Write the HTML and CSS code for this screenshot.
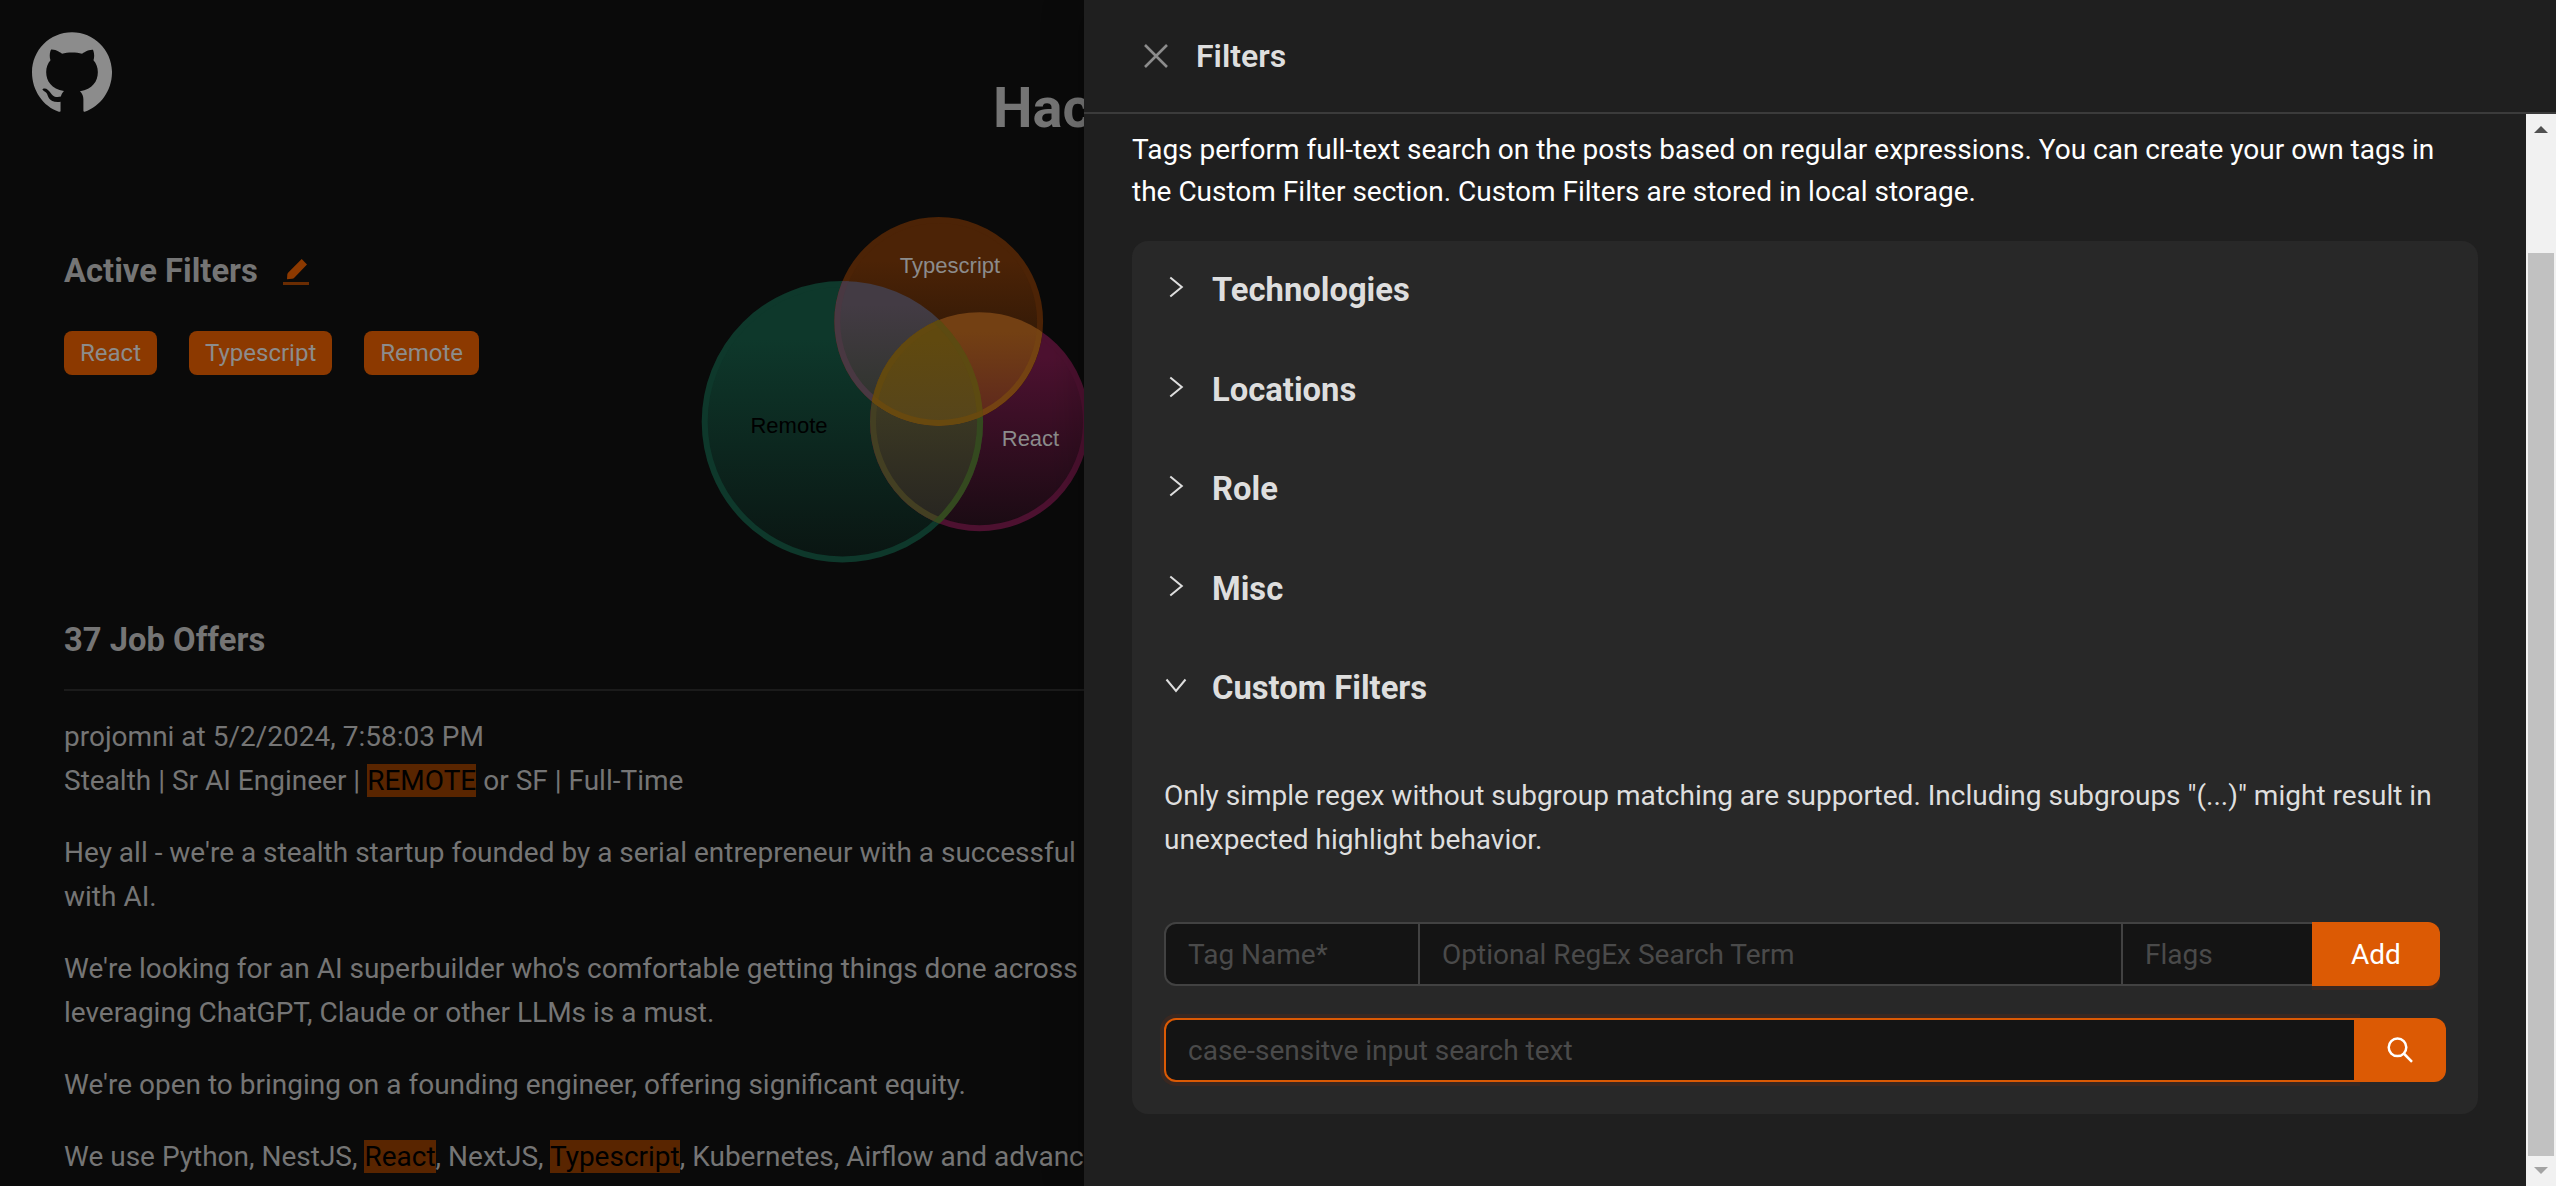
FILE: index.html
```html
<!DOCTYPE html>
<html lang="en">
<head>
<meta charset="utf-8">
<title>Hacker News Jobs</title>
<link rel="stylesheet" href="styles.css">
</head>
<body>
<div class="app">
  <main class="page">
    <a class="github" href="#" aria-label="GitHub">
      <svg viewBox="64 64 896 896" width="80" height="80" fill="currentColor"><path d="M511.600 66C264 66 64 266 64 513.500 64 718.900 189.300 895 363.800 956c23.500 5.900 19.900-10.800 19.900-22.200v-87.500c-135.700 15.900-141.200-73.900-150.300-88.900C215 726 171.500 718 184.500 703c30.900-15.900 62.400 4 98.900 57.900 26.400 39.100 77.900 32.500 104 26 5.700-23.500 17.900-44.500 34.700-60.800-140.600-25.200-199.200-111-199.200-213 0-49.500 16.300-95 48.300-131.700-20.400-60.500 1.900-112.300 4.900-120 58.100-5.200 118.500 41.600 123.200 45.300 33-8.900 70.700-13.600 112.900-13.600 42.400 0 80.200 4.900 113.500 13.900 11.300-8.600 67.300-48.800 121.300-43.900 2.900 7.700 24.700 58.300 5.500 118 32.400 36.800 48.900 82.700 48.900 132.300 0 102.200-59 188.100-200 212.900a127.500 127.500 0 0138.100 91v122.500c.8 9 0 17.900 15 17.900 177.100-59.700 305.600-237 305.600-444.100C960 266 759 66 511.600 66z"/></svg>
    </a>
    <h1 class="title">Hacker News Jobs</h1>
    <div class="summary">
      <section class="active">
        <h3 class="heading">Active Filters
          <svg class="edit" viewBox="0 0 26 27" width="26" height="27"><path d="M18.700 1L24 6.500 11.500 19.500Q10.500 20.700 9 20.700L4 21.300 4.300 16.500Q4.400 15.300 5.300 14.400Z" fill="#8c3900"/><path d="M0 24h26v3H0z" fill="#6a2c02"/></svg>
        </h3>
        <div class="tags"><span class="tag">React</span><span class="tag">Typescript</span><span class="tag">Remote</span></div>
      </section>
      <svg class="venn" viewBox="700 216 390 350" width="390" height="350">
        <defs>
          <linearGradient id="g-remote" x2="0" y2="1"><stop offset=".2" stop-color="#0e382b"/><stop offset="1" stop-color="#0a1512"/></linearGradient>
          <linearGradient id="g-ts" x2="0" y2="1"><stop offset=".2" stop-color="#4c2306"/><stop offset="1" stop-color="#190f07"/></linearGradient>
          <linearGradient id="g-react" x2="0" y2="1"><stop offset=".2" stop-color="#4d1130"/><stop offset="1" stop-color="#1a0b13"/></linearGradient>
          <linearGradient id="g-rt" gradientUnits="userSpaceOnUse" x1="0" y1="280" x2="0" y2="402"><stop offset=".2" stop-color="#433b44"/><stop offset="1" stop-color="#30342d"/></linearGradient>
          <linearGradient id="g-tr" gradientUnits="userSpaceOnUse" x1="0" y1="312" x2="0" y2="412"><stop offset=".2" stop-color="#734013"/><stop offset="1" stop-color="#5f291d"/></linearGradient>
          <linearGradient id="g-rr" gradientUnits="userSpaceOnUse" x1="0" y1="400" x2="0" y2="524"><stop offset="0" stop-color="#3d3a23"/><stop offset="1" stop-color="#272521"/></linearGradient>
          <linearGradient id="g-all" gradientUnits="userSpaceOnUse" x1="0" y1="320" x2="0" y2="422"><stop offset=".2" stop-color="#60490f"/><stop offset="1" stop-color="#56451b"/></linearGradient>
          <clipPath id="c-remote"><circle cx="842.400" cy="421.700" r="140.700"/></clipPath>
          <clipPath id="c-ts"><circle cx="938.700" cy="321.500" r="104.400"/></clipPath>
          <clipPath id="c-react"><circle cx="979.500" cy="421.700" r="109.500"/></clipPath>
        </defs>
        <circle cx="842.400" cy="421.700" r="137.700" fill="url(#g-remote)" stroke="#0e382b" stroke-width="6"/>
        <circle cx="979.500" cy="421.700" r="106.500" fill="url(#g-react)" stroke="#4d1130" stroke-width="6"/>
        <circle cx="938.700" cy="321.500" r="101.400" fill="url(#g-ts)" stroke="#4c2306" stroke-width="6"/>
        <g clip-path="url(#c-remote)">
          <circle cx="938.700" cy="321.500" r="101.400" fill="url(#g-rt)" stroke="#493842" stroke-width="6"/>
          <circle cx="979.500" cy="421.700" r="106.500" fill="url(#g-rr)" stroke="#433f22" stroke-width="6"/>
        </g>
        <g clip-path="url(#c-react)">
          <circle cx="842.400" cy="421.700" r="137.700" fill="none" stroke="#34491f" stroke-width="6"/>
          <g clip-path="url(#c-ts)">
            <circle cx="938.700" cy="321.500" r="101.400" fill="url(#g-tr)" stroke="#744212" stroke-width="6"/>
            <g clip-path="url(#c-remote)">
              <circle cx="938.700" cy="321.500" r="101.400" fill="url(#g-all)"/>
              <circle cx="979.500" cy="421.700" r="106.500" fill="none" stroke="#62490f" stroke-width="6"/>
              <circle cx="842.400" cy="421.700" r="137.700" fill="none" stroke="#5c4a11" stroke-width="6"/>
              <circle cx="938.700" cy="321.500" r="101.400" fill="none" stroke="#68490f" stroke-width="6"/>
            </g>
          </g>
        </g>
        <text class="venn-light" x="950" y="273" text-anchor="middle">Typescript</text>
        <text class="venn-dark" x="789" y="433" text-anchor="middle">Remote</text>
        <text class="venn-light" x="1030.500" y="446" text-anchor="middle">React</text>
      </svg>
    </div>
    <h3 class="heading offers">37 Job Offers</h3>
    <article class="post">
      <p>projomni at 5/2/2024, 7:58:03 PM<br>Stealth | Sr AI Engineer | <mark>REMOTE</mark> or SF | Full-Time</p>
      <p>Hey all - we're a stealth startup founded by a serial entrepreneur with a successful<br>with AI.</p>
      <p>We're looking for an AI superbuilder who's comfortable getting things done across<br>leveraging ChatGPT, Claude or other LLMs is a must.</p>
      <p>We're open to bringing on a founding engineer, offering significant equity.</p>
      <p>We use Python, NestJS, <mark>React</mark>, NextJS, <mark>Typescript</mark>, Kubernetes, Airflow and advanced</p>
    </article>
  </main>

  <aside class="drawer">
    <header class="drawer-head">
      <svg class="close" viewBox="0 0 24 24" width="24" height="24"><path d="M1 1L23 23M23 1L1 23" stroke="currentColor" stroke-width="2.600" fill="none"/></svg>
      <span>Filters</span>
    </header>
    <div class="drawer-main">
      <div class="drawer-body">
        <p class="intro">Tags perform full-text search on the posts based on regular expressions. You can create your own tags in the Custom Filter section. Custom Filters are stored in local storage.</p>
        <div class="collapse">
          <div class="panel"><svg class="chev" viewBox="0 0 24 24"><path d="M6.300 2.500L17.800 12 6.300 21.500" /></svg>Technologies</div>
          <div class="panel"><svg class="chev" viewBox="0 0 24 24"><path d="M6.300 2.500L17.800 12 6.300 21.500" /></svg>Locations</div>
          <div class="panel"><svg class="chev" viewBox="0 0 24 24"><path d="M6.300 2.500L17.800 12 6.300 21.500" /></svg>Role</div>
          <div class="panel"><svg class="chev" viewBox="0 0 24 24"><path d="M6.300 2.500L17.800 12 6.300 21.500" /></svg>Misc</div>
          <div class="panel"><svg class="chev" viewBox="0 0 24 24"><path d="M2.500 6.500L12 18 21.500 6.500" /></svg>Custom Filters</div>
          <div class="content">
            <p class="note">Only simple regex without subgroup matching are supported. Including subgroups "(...)" might result in unexpected highlight behavior.</p>
            <div class="row add-row">
              <input class="input name" placeholder="Tag Name*">
              <input class="input term" placeholder="Optional RegEx Search Term">
              <input class="input flags" placeholder="Flags">
              <button class="btn add">Add</button>
            </div>
            <div class="row">
              <input class="input search" placeholder="case-sensitve input search text">
              <button class="btn find" aria-label="Search"><svg viewBox="0 0 26 26" width="26" height="26"><circle cx="10.500" cy="10.300" r="8.800"/><path d="M16.800 16.500L25 24.800"/></svg></button>
            </div>
          </div>
        </div>
      </div>
      <div class="scrollbar">
        <svg viewBox="0 0 14 7" width="14" height="7"><path d="M0 7L7 0l7 7z" fill="#505050"/></svg>
        <div class="thumb"></div>
        <svg viewBox="0 0 14 7" width="14" height="7"><path d="M0 0L7 7l7-7z" fill="#a3a3a3"/></svg>
      </div>
    </div>
  </aside>
</div>
</body>
</html>
```
FILE: styles.css
```css
* { box-sizing: border-box; }
body { margin: 0; background: #0a0a0a; font-family: Roboto, "Liberation Sans", sans-serif; font-size: 28px; line-height: 44px; }
h1, h3, p { margin: 0; }
.app { display: flex; width: 2556px; height: 1186px; overflow: hidden; }
.page { flex: 0 0 1084px; padding: 32px 0 0 64px; overflow: hidden; color: #757575; white-space: nowrap; }
.github { display: block; width: 80px; height: 80px; margin-left: -32px; color: #8c8c8c; }
.github svg { display: block; }
.title { margin: -38px 0 0 929px; font-size: 56px; line-height: 68px; font-weight: 700; }
.summary { display: flex; margin-top: 74px; height: 350px; }
.active { width: 636px; padding-top: 31px; flex: none; }
.heading { font-size: 32.76px; line-height: 48px; font-weight: 700; }
.edit { display: inline-block; margin-left: 17px; vertical-align: -3px; }
.tags { display: flex; gap: 32px; margin-top: 36px; }
.tag { height: 44px; padding: 0 16px; border-radius: 8px; background: #8c3900; color: #8c8c8c; font-size: 24px; line-height: 44px; }
.venn { flex: none; }
.venn text { font: 22px "Liberation Sans", Arial, sans-serif; }
.venn-light { fill: #8c8c8c; }
.venn-dark { fill: #000; }
.offers { height: 73px; margin-top: 50px; }
.post { display: flex; flex-direction: column; gap: 28px; padding-top: 24px; border-top: 2px solid #1b1b1b; }
mark { background: #592500; color: #000; }

.drawer { flex: 1; display: flex; flex-direction: column; background: #1f1f1f; box-shadow: -12px 0 32px rgba(0, 0, 0, .16); position: relative; color: #dedede; }
.drawer-head { display: flex; align-items: center; gap: 28px; height: 114px; padding: 0 60px; border-bottom: 2px solid #3b3b3b; font-size: 32px; font-weight: 600; }
.close { color: #8c8c8c; }
.drawer-main { display: flex; flex: 1; }
.drawer-body { flex: 1; padding: 15px 48px 0; }
.intro { color: #fff; line-height: 42px; }
.collapse { height: 873px; margin-top: 28px; border-radius: 16px; background: #282828; }
.panel { display: flex; align-items: center; height: 99.500px; padding: 0 0 1px 32px; gap: 24px; font-size: 32.76px; font-weight: 700; }
.chev { width: 24px; height: 24px; margin-top: -6px; fill: none; stroke: currentColor; stroke-width: 2; }
.content { display: flex; flex-direction: column; padding: 35.500px 32px 0; }
.note { margin-bottom: 60px; }
.row { display: flex; margin-bottom: 32px; }
.add-row { width: 1276px; }
.input { height: 64px; padding: 0 22px; margin: 0; border: 2px solid #424242; background: #141414; font: 28px Roboto, sans-serif; outline: none; color: #dedede; border-radius: 0; }
.input::placeholder { color: #4a4a4a; opacity: 1; }
.name { width: 256px; border-radius: 12px 0 0 12px; }
.term { flex: 1; margin-left: -2px; min-width: 0; }
.flags { width: 191px; margin-left: -2px; border-right: 0; }
.btn { display: flex; align-items: center; justify-content: center; height: 64px; padding: 0; border: 0; border-radius: 0 12px 12px 0; background: #dc5a04; color: #fff; font: 28px Roboto, sans-serif; }
.add { width: 128px; box-shadow: 0 4px 0 #3a2821; }
.search { width: 1192px; border-color: #dc5a04; border-radius: 12px 0 0 12px; box-shadow: 0 0 0 4px #3a2821; }
.find { width: 90px; padding-right: 2px; position: relative; }
.find svg { fill: none; stroke: #fff; stroke-width: 2.500; }
.scrollbar { display: flex; flex-direction: column; align-items: center; width: 30px; padding: 12px 0; background: #f1f1f1; }
.thumb { width: 26px; height: 903px; margin: 120px 0 11px; background: #c1c1c1; }
```
